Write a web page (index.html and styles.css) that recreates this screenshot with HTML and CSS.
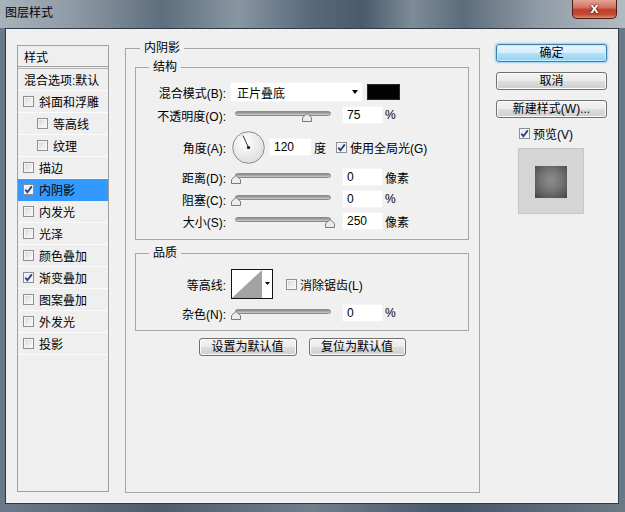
FILE: index.html
```html
<!DOCTYPE html>
<html lang="zh-CN">
<head>
<meta charset="utf-8">
<title>图层样式</title>
<link rel="stylesheet" href="styles.css">
</head>
<body>
<div class="window">
  <div class="titlebar">
    <span class="title">图层样式</span>
    <span class="close">x</span>
  </div>
  <div class="content">
    <div class="stylelist">
      <div class="list-head">样式</div>
      <div class="list-row blend">混合选项:默认</div>
      <div class="list-row"><span class="cb"></span>斜面和浮雕</div>
      <div class="list-row sub"><span class="cb"></span>等高线</div>
      <div class="list-row sub"><span class="cb"></span>纹理</div>
      <div class="list-row"><span class="cb"></span>描边</div>
      <div class="list-row selected"><span class="cb on"><svg viewBox="0 0 9 9" width="9" height="9"><path d="M1.3 4.6 L3.4 7.2 L7.8 1.4" fill="none" stroke="#2b3c8e" stroke-width="1.8"/></svg></span>内阴影</div>
      <div class="list-row"><span class="cb"></span>内发光</div>
      <div class="list-row"><span class="cb"></span>光泽</div>
      <div class="list-row"><span class="cb"></span>颜色叠加</div>
      <div class="list-row"><span class="cb on"><svg viewBox="0 0 9 9" width="9" height="9"><path d="M1.3 4.6 L3.4 7.2 L7.8 1.4" fill="none" stroke="#2b3c8e" stroke-width="1.8"/></svg></span>渐变叠加</div>
      <div class="list-row"><span class="cb"></span>图案叠加</div>
      <div class="list-row"><span class="cb"></span>外发光</div>
      <div class="list-row"><span class="cb"></span>投影</div>
    </div>

    <fieldset class="panel">
      <legend>内阴影</legend>
      <fieldset class="group struct">
        <legend>结构</legend>
        <div class="row h20">
          <span class="lbl">混合模式(B):</span>
          <div class="select">正片叠底<span class="arrow"></span></div>
          <span class="swatch"></span>
        </div>
        <div class="row h18 m4">
          <span class="lbl">不透明度(O):</span>
          <div class="slider"><div class="track"><svg class="thumb" style="left:75%" width="10" height="9" viewBox="0 0 10 9"><polygon points="0.5,8.5 0.5,4.5 5,0.5 9.5,4.5 9.5,8.5" fill="#ececec" stroke="#7a7a7a" stroke-width="1"/></svg></div></div>
          <span class="field">75</span>
          <span class="unit">%</span>
        </div>
        <div class="row h32 m7">
          <span class="lbl">角度(A):</span>
          <svg class="dial" width="33" height="33" viewBox="0 0 33 33">
            <defs>
              <radialGradient id="dg" cx="0.4" cy="0.35" r="0.7">
                <stop offset="0" stop-color="#ffffff"/>
                <stop offset="1" stop-color="#dcdcdc"/>
              </radialGradient>
            </defs>
            <circle cx="16.5" cy="16.5" r="15.8" fill="url(#dg)" stroke="#8c8c8c" stroke-width="1"/>
            <line x1="16.5" y1="16.5" x2="11" y2="4.5" stroke="#333" stroke-width="1"/>
            <circle cx="16.5" cy="16.5" r="1.6" fill="#111"/>
          </svg>
          <span class="field wide">120</span>
          <span class="unit deg">度</span>
          <span class="cb on gap10"><svg viewBox="0 0 9 9" width="9" height="9"><path d="M1.3 4.6 L3.4 7.2 L7.8 1.4" fill="none" stroke="#2b3c8e" stroke-width="1.8"/></svg></span>
          <span class="cbtext">使用全局光(G)</span>
        </div>
        <div class="row h18 m5">
          <span class="lbl">距离(D):</span>
          <div class="slider"><div class="track"><svg class="thumb" style="left:0%" width="10" height="9" viewBox="0 0 10 9"><polygon points="0.5,8.5 0.5,4.5 5,0.5 9.5,4.5 9.5,8.5" fill="#ececec" stroke="#7a7a7a" stroke-width="1"/></svg></div></div>
          <span class="field">0</span>
          <span class="unit">像素</span>
        </div>
        <div class="row h18 m4">
          <span class="lbl">阻塞(C):</span>
          <div class="slider"><div class="track"><svg class="thumb" style="left:0%" width="10" height="9" viewBox="0 0 10 9"><polygon points="0.5,8.5 0.5,4.5 5,0.5 9.5,4.5 9.5,8.5" fill="#ececec" stroke="#7a7a7a" stroke-width="1"/></svg></div></div>
          <span class="field">0</span>
          <span class="unit">%</span>
        </div>
        <div class="row h18 m4">
          <span class="lbl">大小(S):</span>
          <div class="slider"><div class="track"><svg class="thumb" style="left:100%" width="10" height="9" viewBox="0 0 10 9"><polygon points="0.5,8.5 0.5,4.5 5,0.5 9.5,4.5 9.5,8.5" fill="#ececec" stroke="#7a7a7a" stroke-width="1"/></svg></div></div>
          <span class="field">250</span>
          <span class="unit">像素</span>
        </div>
      </fieldset>

      <fieldset class="group quality">
        <legend>品质</legend>
        <div class="row h30">
          <span class="lbl">等高线:</span>
          <div class="contour">
            <svg width="40" height="28" viewBox="0 0 40 28">
              <polygon points="0,28 30,0 30,28" fill="#a3a3a3"/>
              <polygon points="33,12 38,12 35.5,15" fill="#000"/>
            </svg>
          </div>
          <span class="cb gap13"></span>
          <span class="cbtext">消除锯齿(L)</span>
        </div>
        <div class="row h18 m5">
          <span class="lbl">杂色(N):</span>
          <div class="slider"><div class="track"><svg class="thumb" style="left:0%" width="10" height="9" viewBox="0 0 10 9"><polygon points="0.5,8.5 0.5,4.5 5,0.5 9.5,4.5 9.5,8.5" fill="#ececec" stroke="#7a7a7a" stroke-width="1"/></svg></div></div>
          <span class="field">0</span>
          <span class="unit">%</span>
        </div>
      </fieldset>

      <div class="defaults">
        <span class="btn w98">设置为默认值</span>
        <span class="btn w97">复位为默认值</span>
      </div>
    </fieldset>

    <div class="side">
      <span class="btn side-btn primary">确定</span>
      <span class="btn side-btn">取消</span>
      <span class="btn side-btn">新建样式(W)...</span>
      <div class="preview-check">
        <span class="cb on"><svg viewBox="0 0 9 9" width="9" height="9"><path d="M1.3 4.6 L3.4 7.2 L7.8 1.4" fill="none" stroke="#2b3c8e" stroke-width="1.8"/></svg></span>
        <span class="cbtext">预览(V)</span>
      </div>
      <div class="preview"><div class="preview-inner"></div></div>
    </div>
  </div>
</div>
</body>
</html>
```

FILE: styles.css
```css
* { box-sizing: border-box; }
html, body { margin: 0; padding: 0; }
body {
  font-family: "Liberation Sans", "Noto Sans CJK SC", sans-serif;
  font-size: 12px;
  color: #000;
}

.window {
  width: 625px;
  height: 512px;
  display: flex;
  flex-direction: column;
  overflow: hidden;
  background: linear-gradient(90deg, #6a7a8a 0%, #4d5d6e 25%, #6f7e8b 50%, #46566a 72%, #6b7986 100%);
}

.titlebar {
  height: 28px;
  display: flex;
  align-items: flex-start;
  background: linear-gradient(90deg, #a8b2ba 0%, #8d99a4 12%, #5f6e7d 26%, #8896a2 38%, #58677a 50%, #4b5a6b 58%, #7e8c98 66%, #5d6c7b 74%, #8f9ba5 86%, #b3bbc2 100%);
}
.title {
  margin: 6px 0 0 5px;
  line-height: 14px;
  font-size: 12px;
}
.close {
  margin-left: auto;
  margin-right: 8px;
  width: 45px;
  height: 19px;
  border: 1px solid #4a1f18;
  border-top: 0;
  border-radius: 0 0 5px 5px;
  background: linear-gradient(#e5a396 0%, #d47565 40%, #c13f2b 55%, #c54a33 80%, #de8a66 100%);
  color: #fff;
  font-weight: bold;
  font-size: 15px;
  line-height: 16px;
  text-align: center;
  text-shadow: 0 0 2px #3a0a05, 0 0 1px #3a0a05;
}

.content {
  flex: 1;
  margin: 0 6px 8px 5px;
  border: 1px solid #2e3a47;
  background: #f0f0f0;
  display: flex;
  align-items: flex-start;
  padding: 11px 0 0 11px;
}

/* left list */
.stylelist {
  margin-top: 5px;
  width: 92px;
  height: 447px;
  border: 1px solid #a0a0a0;
  background: #efefef;
}
.list-head {
  height: 21px;
  border-bottom: 1px solid #a0a0a0;
  padding-left: 6px;
  display: flex;
  align-items: center;
}
.list-row {
  height: 22px;
  border-bottom: 1px solid #fbfbfb;
  display: flex;
  align-items: center;
  padding-left: 5px;
}
.list-row.blend {
  margin-top: 1px;
  height: 23px;
  border-top: 1px solid #b4b4b4;
  padding-left: 6px;
}
.list-row.sub { padding-left: 19px; }
.list-row.selected {
  background: #3399ff;
  border-bottom-color: #3399ff;
}
.list-row .cb { margin-right: 5px; }

/* checkbox */
.cb {
  width: 11px;
  height: 11px;
  flex: none;
  border: 1px solid #8e8f8f;
  background: linear-gradient(135deg, #d6d6d6 0%, #eeeeee 60%, #fbfbfb 100%);
  box-shadow: inset 0 0 0 1px #f6f6f6;
  display: flex;
  align-items: center;
  justify-content: center;
}
.cb.on { background: linear-gradient(135deg, #e8e8e8 0%, #fafafa 100%); }
.cb svg { display: block; }
.cbtext { margin-left: 3px; }
.gap10 { margin-left: 10px; }
.gap13 { margin-left: 13px; }

/* main panel */
fieldset {
  margin: 0;
  min-width: 0;
  border: 1px solid #a6a6a6;
}
legend {
  padding: 0 4px;
  line-height: 16px;
  height: 16px;
  font-size: 12px;
}
.panel {
  margin-left: 16px;
  width: 355px;
  height: 453px;
  padding: 3px 10px 0 9px;
}
.panel > legend { margin-left: 5px; }

.group {
  width: 334px;
}
.group > legend { margin-left: 13px; }
.struct { padding: 7px 0 9px 0; }
.quality { margin-top: 5px; padding: 8px 0 8px 0; }

.row {
  display: flex;
  align-items: center;
}
.h18 { height: 18px; }
.h20 { height: 20px; }
.h30 { height: 30px; }
.h32 { height: 32px; }
.m4 { margin-top: 4px; }
.m5 { margin-top: 5px; }
.m7 { margin-top: 7px; }

.lbl {
  width: 90px;
  flex: none;
  text-align: right;
  white-space: nowrap;
}

.select {
  margin-left: 4px;
  width: 133px;
  height: 20px;
  background: #fff;
  border: 1px solid #f4f4f4;
  display: flex;
  align-items: center;
  padding-left: 6px;
}
.arrow {
  margin-left: auto;
  margin-right: 4px;
  width: 0;
  height: 0;
  border-left: 3.5px solid transparent;
  border-right: 3.5px solid transparent;
  border-top: 4px solid #000;
}
.swatch {
  margin-left: 4px;
  width: 33px;
  height: 16px;
  background: #030303;
  border: 1px solid #2a2a2a;
}

.slider {
  margin-left: 7px;
  width: 99px;
  height: 18px;
  flex: none;
}
.track {
  position: relative;
  margin: 5px 1px 0 2px;
  height: 5px;
  border-radius: 3px;
  background: linear-gradient(#8a8a8a, #b0b0b0 60%, #cdcdcd);
  border: 1px solid #8a8a8a;
}
.thumb {
  position: absolute;
  top: 1px;
  margin-left: -5px;
  display: block;
}

.field {
  margin-left: 10px;
  width: 41px;
  height: 18px;
  background: #fff;
  border: 1px solid #f4f4f4;
  padding-left: 4px;
  display: flex;
  align-items: center;
}
.field.wide { margin-left: 4px; width: 43px; }
.unit { margin-left: 2px; }
.unit.deg { margin-left: 2px; }

.dial { margin-left: 6px; display: block; flex: none; }

.contour {
  margin-left: 5px;
  width: 42px;
  height: 30px;
  border: 1px solid #111;
  background: #fff;
}
.contour svg { display: block; }

.defaults {
  margin-top: 7px;
  display: flex;
  justify-content: center;
  gap: 12px;
}

/* buttons */
.btn {
  height: 18px;
  border: 1px solid #707070;
  border-radius: 3px;
  background: linear-gradient(#f3f3f3 0%, #ebebeb 48%, #dddddd 52%, #cfcfcf 100%);
  display: flex;
  align-items: center;
  justify-content: center;
  line-height: 16px;
  box-shadow: inset 0 0 0 1px #fbfbfb;
}
.w98 { width: 98px; }
.w97 { width: 97px; }

.side {
  margin-left: 16px;
  margin-top: 4px;
  width: 111px;
  display: flex;
  flex-direction: column;
}
.side-btn { width: 111px; margin-bottom: 10px; }
.side-btn.primary {
  border-color: #3c7fb1;
  background: linear-gradient(#e9f6fd 0%, #d7effc 48%, #b2e0f8 52%, #93d2f3 100%);
  box-shadow: inset 0 0 0 1px #c7ecfd, 0 0 2px 1px #8fd0f0;
}
.preview-check {
  margin-top: -2px;
  height: 14px;
  display: flex;
  align-items: center;
  padding-left: 23px;
}
.preview {
  margin-top: 8px;
  margin-left: 22px;
  width: 66px;
  height: 66px;
  background: #d5d5d5;
  border: 1px solid #c6c6c6;
  padding: 17px 0 0 16px;
}
.preview-inner {
  width: 32px;
  height: 32px;
  background: radial-gradient(circle at 50% 45%, #8e8e8e 0%, #747474 45%, #444 100%);
}
```
